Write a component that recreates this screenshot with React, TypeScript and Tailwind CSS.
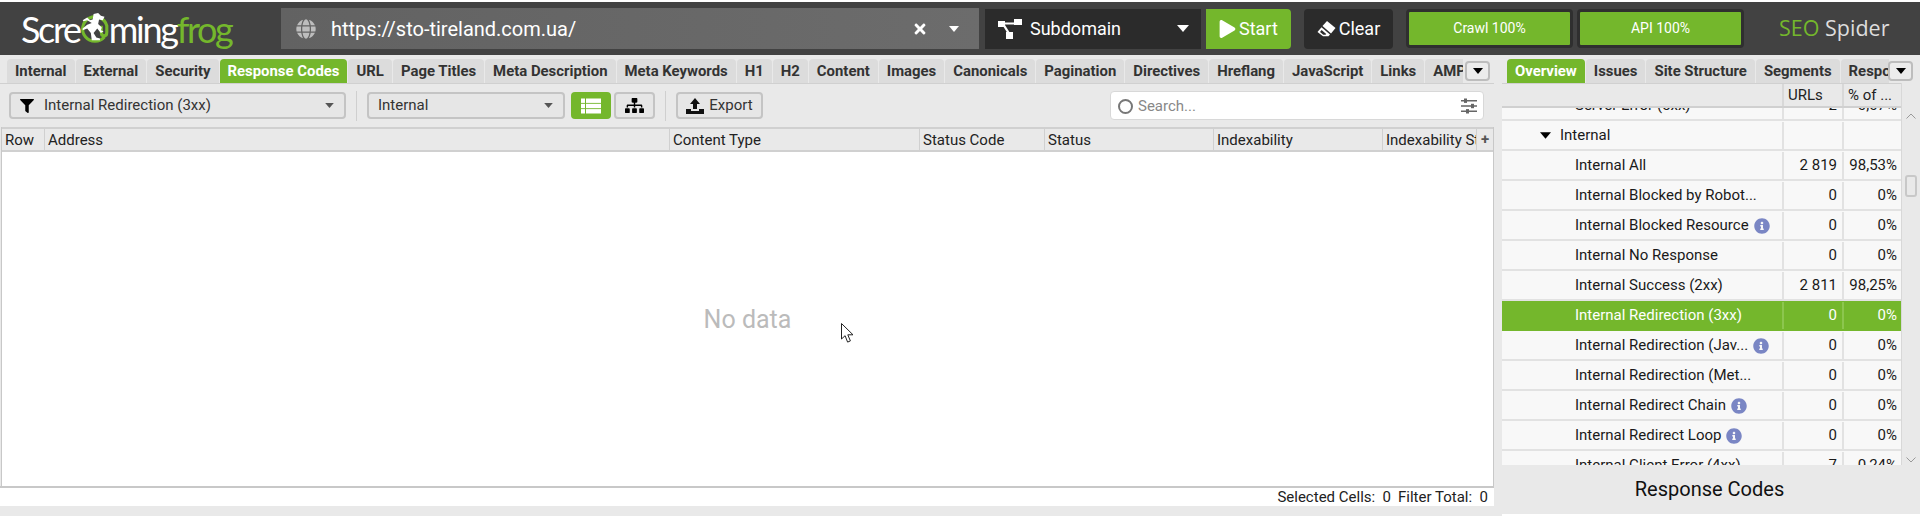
/**
 * SEO Spider window: response codes tab, empty table and overview panel
 */
import { clsx } from 'clsx';
import { FaFilter, FaGlobe, FaInfoCircle, FaPlay, FaSitemap, FaTimes } from 'react-icons/fa';

const MAIN_TABS = [
  'Internal', 'External', 'Security', 'Response Codes', 'URL', 'Page Titles', 'Meta Description', 'Meta Keywords',
  'H1', 'H2', 'Content', 'Images', 'Canonicals', 'Pagination', 'Directives', 'Hreflang', 'JavaScript', 'Links', 'AMP',
];
const SIDE_TABS = ['Overview', 'Issues', 'Site Structure', 'Segments', 'Response Codes'];

const COLUMNS = [
  { label: 'Row', width: 'w-[42px]' },
  { label: 'Address', width: 'w-[625px]' },
  { label: 'Content Type', width: 'w-[250px]' },
  { label: 'Status Code', width: 'w-[125px]' },
  { label: 'Status', width: 'w-[169px]' },
  { label: 'Indexability', width: 'w-[169px]' },
  { label: 'Indexability Status', width: 'w-[94px]' },
];

const ROWS = [
  { name: 'Server Error (5xx)', urls: '2', pct: '0,07%', indent: 'pl-[73px]' },
  { name: 'Internal', urls: '', pct: '', group: true },
  { name: 'Internal All', urls: '2 819', pct: '98,53%' },
  { name: 'Internal Blocked by Robot...', urls: '0', pct: '0%' },
  { name: 'Internal Blocked Resource', urls: '0', pct: '0%', info: true },
  { name: 'Internal No Response', urls: '0', pct: '0%' },
  { name: 'Internal Success (2xx)', urls: '2 811', pct: '98,25%' },
  { name: 'Internal Redirection (3xx)', urls: '0', pct: '0%', active: true },
  { name: 'Internal Redirection (Jav...', urls: '0', pct: '0%', info: true },
  { name: 'Internal Redirection (Met...', urls: '0', pct: '0%' },
  { name: 'Internal Redirect Chain', urls: '0', pct: '0%', info: true },
  { name: 'Internal Redirect Loop', urls: '0', pct: '0%', info: true },
  { name: 'Internal Client Error (4xx)', urls: '7', pct: '0,24%' },
];

function Caret({ className }: { className?: string }) {
  return (
    <svg viewBox="0 0 12 7" className={className} fill="currentColor">
      <path d="M0 0h12L6 7z" />
    </svg>
  );
}

function FrogMark() {
  return (
    <svg viewBox="0 0 34 40" className="w-[31px] h-[37px] shrink-0 mx-[-1px]">
      <path d="M28 29A13.5 13.5 0 1 1 30.5 17v7q0 4-3 4t-3-4v-7" fill="none" stroke="#74b72c" strokeWidth="3.4" />
      <path
        d="M4 11l5-3 3 3 3-1 1-6 5-1 3 3 4 1-2 4-4-1-1 5 4 4-1 3 3 1-3 2-4-5-4 5 3 5 4 1 0 2-9 0-1-8-4-5-5 2 0-2 5-4 5-2-5-3-4 1z"
        fill="#fff"
      />
    </svg>
  );
}

function Logo() {
  return (
    <div className="w-[281px] pl-[21px] flex items-center font-['Lato',sans-serif] font-normal text-[36px] leading-none tracking-[-2.3px] text-white">
      <span>Scre</span>
      <FrogMark />
      <span>ming</span>
      <span className="text-[#74b72c]">frog</span>
    </div>
  );
}

function Eraser() {
  return (
    <svg viewBox="0 0 19 16" className="w-[19px] h-[16px]" fill="#fff">
      <path d="M10 0l8.5 7-4.5 5.5L5.5 5z" />
      <path d="M4.5 6.2l8.5 7.3-1.5 1.7H6L.5 11z" />
      <path d="M4.6 9l4.6 4-.6.7H6.3L3 11z" fill="#2b2b2b" />
    </svg>
  );
}

function NetworkIcon() {
  return (
    <svg viewBox="0 0 24 20" className="w-[24px] h-[20px]" fill="#fff">
      <rect x="0" y="2" width="7" height="6" />
      <rect x="16" y="0" width="8" height="6" />
      <rect x="8" y="13" width="7" height="7" />
      <path d="M6 3.5h11v2H6zM5 7l2-1 5 8-2 1z" />
    </svg>
  );
}

function ListIcon() {
  return (
    <svg viewBox="0 0 20 16" className="w-[20px] h-[16px]" fill="#fff">
      <rect x="0" y="0.5" width="4" height="4.4" />
      <rect x="5" y="0.5" width="15" height="4.4" />
      <rect x="0" y="5.8" width="4" height="4.4" />
      <rect x="5" y="5.8" width="15" height="4.4" />
      <rect x="0" y="11.1" width="4" height="4.4" />
      <rect x="5" y="11.1" width="15" height="4.4" />
    </svg>
  );
}

function UploadIcon() {
  return (
    <svg viewBox="0 0 18 16" className="w-[18px] h-[16px]" fill="#111">
      <path d="M9 0l5 6h-3v5H7V6H4z" />
      <path d="M0 11h5v2h8v-2h5v5H0z" />
    </svg>
  );
}

function SlidersIcon() {
  return (
    <svg viewBox="0 0 16 16" className="w-[16px] h-[16px]" fill="#666">
      <path d="M0 2h16v1.4H0zM0 7.3h16v1.4H0zM0 12.6h16V14H0z" />
      <rect x="3" y="0.5" width="3" height="4.4" />
      <rect x="10" y="5.8" width="3" height="4.4" />
      <rect x="5" y="11.1" width="3" height="4.4" />
    </svg>
  );
}

function Cursor() {
  return (
    <svg viewBox="0 0 13 21" className="absolute left-[841px] top-[323px] w-[13px] h-[21px]">
      <path d="M.5.5v15.5l3.6-3.3 2.5 6.4 2.8-1.2-2.6-6.1h5.2z" fill="#fff" stroke="#222" strokeWidth="1" />
    </svg>
  );
}

function Tab({ label, active }: { label: string; active?: boolean }) {
  return (
    <div
      className={clsx(
        'h-[24px] px-[8px] pt-[1px] shrink-0 rounded-t-[4px] flex items-center text-[14.9px] font-bold whitespace-nowrap',
        active ? 'bg-[#74b72c] text-white' : 'bg-[#dcdcdc] text-[#333]'
      )}
    >
      {label}
    </div>
  );
}

function MoreButton() {
  return (
    <div className="w-[25px] h-[20px] rounded-[4px] border-2 border-[#bdbdbd] bg-[#ececec] flex items-center justify-center">
      <Caret className="w-[10px] h-[6px] text-black" />
    </div>
  );
}

function Dropdown({ label, width, icon }: { label: string; width: string; icon?: boolean }) {
  return (
    <div
      className={clsx(
        'h-[27px] rounded-[4px] border-2 border-[#c4c4c4] bg-[#e6e6e6] flex items-center pl-[9px] pr-[10px] text-[15px] text-[#333]',
        width
      )}
    >
      {icon && <FaFilter className="w-[14px] h-[14px] text-black mr-[10px]" />}
      <span className="flex-1">{label}</span>
      <Caret className="w-[9px] h-[5px] text-[#555]" />
    </div>
  );
}

function TreeRow({ row }: { row: (typeof ROWS)[number] }) {
  return (
    <div
      className={clsx(
        'h-[30px] flex border-b-2 pt-[1px] text-[15px]',
        row.active ? 'bg-[#74b72c] text-white border-[#74b72c]' : 'bg-[#f8f8f8] text-[#1a1a1a] border-[#e2e2e2]'
      )}
    >
      <div
        className={clsx(
          'w-[280px] flex items-center whitespace-nowrap',
          row.group ? 'pl-[38px]' : (row.indent ?? 'pl-[73px]')
        )}
      >
        {row.group && <Caret className="w-[11px] h-[9px] text-black mr-[9px]" />}
        <span>{row.name}</span>
        {row.info && <FaInfoCircle className="w-[16px] h-[16px] ml-[5px] text-[#7a86c4]" />}
      </div>
      <div className={clsx('w-[60px] flex items-center justify-end pr-[5px] border-l-2', row.active ? 'border-[#8cc64e]' : 'border-[#e2e2e2]')}>
        {row.urls}
      </div>
      <div className={clsx('w-[59px] flex items-center justify-end pr-[4px] border-l-2', row.active ? 'border-[#8cc64e]' : 'border-[#e2e2e2]')}>
        {row.pct}
      </div>
    </div>
  );
}

export default function App() {
  return (
    <div className="relative w-[1920px] h-[516px] overflow-hidden bg-[#e9e9e9] font-['Roboto',sans-serif]">
      <div className="h-[2px] bg-white" />

      {/* Barre du haut */}
      <header className="h-[53px] bg-[#424242] flex items-center text-white">
        <Logo />
        <div className="w-[698px] h-[41px] flex items-center bg-gradient-to-r from-[#626262] to-[#6c6c6c] pl-[15px] pr-[20px]">
          <FaGlobe className="w-[20px] h-[20px] text-[#bdbdbd] mr-[15px]" />
          <span className="flex-1 text-[20px]">https://sto-tireland.com.ua/</span>
          <FaTimes className="w-[16px] h-[16px] mr-[21px]" />
          <Caret className="w-[10px] h-[6px]" />
        </div>
        <div className="ml-[6px] w-[216px] h-[40px] bg-[#2b2b2b] flex items-center pl-[13px] pr-[12px] text-[18px]">
          <NetworkIcon />
          <span className="flex-1 ml-[8px]">Subdomain</span>
          <Caret className="w-[12px] h-[7px]" />
        </div>
        <div className="ml-[5px] w-[85px] h-[40px] rounded-r-[4px] bg-[#74b72c] flex items-center pl-[13px] text-[18px]">
          <FaPlay className="w-[17px] h-[18px] mr-[3px]" />
          Start
        </div>
        <div className="ml-[13px] w-[89px] h-[40px] rounded-[4px] bg-[#2b2b2b] flex items-center justify-center gap-[3px] text-[18px]">
          <Eraser />
          Clear
        </div>
        <div className="ml-[13px] flex gap-[4px]">
          {['Crawl 100%', 'API 100%'].map((label) => (
            <div key={label} className="w-[167px] h-[39px] rounded-[4px] border-[3px] border-[#2f2f2f] bg-[#74b72c] flex items-center justify-center text-[14px]">
              {label}
            </div>
          ))}
        </div>
        <div className="ml-[35px] font-['Open_Sans',sans-serif] text-[21.5px]">
          <span className="text-[#74b72c]">SEO</span> <span className="text-[#ddd]">Spider</span>
        </div>
      </header>

      <div className="flex h-[461px]">
        {/* Panneau gauche */}
        <div className="w-[1494px] flex flex-col shrink-0">
          <div className="relative h-[28px] pt-[4px] pl-[7px] pr-[5px] flex">
            <div className="w-[1456px] flex gap-[1px] overflow-hidden">
              {MAIN_TABS.map((tab) => (
                <Tab key={tab} label={tab} active={tab === 'Response Codes'} />
              ))}
            </div>
            <div className="absolute right-[4px] top-[6px]">
              <MoreButton />
            </div>
          </div>

          <div className="h-[44px] border-t border-[#d0d0d0] flex items-center pl-[9px] pr-[10px]">
            <Dropdown label="Internal Redirection (3xx)" width="w-[337px]" icon />
            <div className="w-px h-[30px] bg-[#cfcfcf] mx-[10px]" />
            <Dropdown label="Internal" width="w-[198px]" />
            <div className="ml-[6px] w-[40px] h-[27px] rounded-[4px] bg-[#74b72c] flex items-center justify-center">
              <ListIcon />
            </div>
            <div className="ml-[3px] w-[41px] h-[27px] rounded-[4px] border-2 border-[#c4c4c4] bg-[#e6e6e6] flex items-center justify-center">
              <FaSitemap className="w-[19px] h-[17px] text-black" />
            </div>
            <div className="w-px h-[30px] bg-[#cfcfcf] mx-[10px]" />
            <div className="w-[87px] h-[27px] rounded-[4px] border-2 border-[#c4c4c4] bg-[#e6e6e6] flex items-center justify-center gap-[5px] text-[15px] text-[#333]">
              <UploadIcon />
              Export
            </div>
            <div className="ml-auto w-[374px] h-[29px] rounded-[4px] border border-[#d8d8d8] bg-white flex items-center pl-[7px] pr-[6px] pt-[1px] text-[15px] text-[#888]">
              <div className="w-[15px] h-[15px] rounded-full border-2 border-[#777] mr-[5px]" />
              <span className="flex-1">Search...</span>
              <SlidersIcon />
            </div>
          </div>

          {/* Tableau vide */}
          <div className="flex-1 flex flex-col ml-[1px] border-l border-r border-[#c8c8c8]">
            <div className="h-[25px] flex bg-[#e9e9e9] border-t-2 border-b-2 border-[#d0d0d0] text-[15px] text-[#222]">
              {COLUMNS.map((col, i) => (
                <div
                  key={col.label}
                  className={clsx('h-full shrink-0 flex items-center px-[3px] pt-[1px] whitespace-nowrap overflow-hidden border-[#d0d0d0]', col.width, i > 0 && 'border-l')}
                >
                  {col.label}
                </div>
              ))}
              <div className="flex-1 border-l border-[#d0d0d0] flex items-center justify-center font-bold text-[#555]">+</div>
            </div>
            <div className="flex-1 bg-white flex items-center justify-center pt-[2px] text-[25px] text-[#bbb]">No data</div>
          </div>
          <div className="h-[20px] bg-white border-t-2 border-[#c8c8c8] flex items-center justify-end gap-[7px] pr-[6px] text-[15px] text-[#222]">
            <span>Selected Cells:&nbsp; 0</span>
            <span>Filter Total:&nbsp; 0</span>
          </div>
          <div className="h-[10px]" />
        </div>

        {/* Panneau de droite */}
        <div className="flex-1 flex flex-col min-w-0 pl-[8px]">
          <div className="relative h-[28px] pt-[4px] pl-[5px] flex">
            <div className="w-[382px] flex gap-[1px] overflow-hidden">
              {SIDE_TABS.map((tab) => (
                <Tab key={tab} label={tab} active={tab === 'Overview'} />
              ))}
            </div>
            <div className="absolute right-[7px] top-[6px]">
              <MoreButton />
            </div>
          </div>
          <div className="flex h-[382px]">
            <div className="w-[399px] flex flex-col">
              <div className="h-[25px] flex border-t border-b-2 border-[#d0d0d0] text-[15px] text-[#222]">
                <div className="w-[280px]" />
                <div className="w-[60px] border-l-2 border-[#d8d8d8] pl-[4px] flex items-center">URLs</div>
                <div className="w-[59px] border-l-2 border-[#d8d8d8] pl-[4px] flex items-center">% of ...</div>
              </div>
              <div className="flex-1 overflow-hidden">
                <div className="-mt-[17px]">
                  {ROWS.map((row) => (
                    <TreeRow key={row.name} row={row} />
                  ))}
                </div>
              </div>
            </div>
            <div className="flex-1 flex flex-col items-center border-l border-[#d8d8d8] pt-[30px] relative">
              <svg viewBox="0 0 10 6" className="w-[10px] h-[6px]" fill="none" stroke="#999">
                <path d="M.5 5.5L5 1l4.5 4.5" />
              </svg>
              <div className="mt-[56px] w-[12px] h-[22px] rounded-[3px] border-2 border-[#c8c8c8]" />
              <svg viewBox="0 0 10 6" className="mt-auto mb-[2px] w-[10px] h-[6px]" fill="none" stroke="#999">
                <path d="M.5.5L5 5l4.5-4.5" />
              </svg>
            </div>
          </div>
          <div className="h-[49px] flex items-center justify-center text-[20px] text-[#111] pr-[3px] pb-[2px]">Response Codes</div>
          <div className="h-[2px] bg-white" />
        </div>
      </div>

      <Cursor />
    </div>
  );
}
